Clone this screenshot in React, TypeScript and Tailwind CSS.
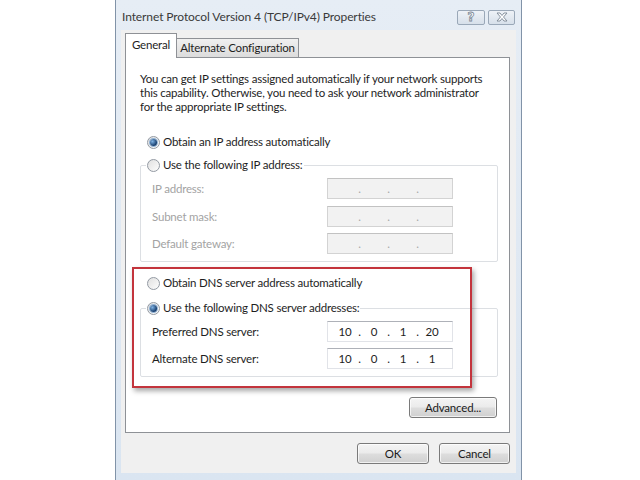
type RadioProps = { checked?: boolean };

function Radio({ checked }: RadioProps) {
  return (
    <span className="w-[13px] h-[13px] shrink-0 rounded-full border border-[#939aa3] bg-[linear-gradient(135deg,#e0e0e0,#fdfdfd)] flex items-center justify-center">
      {checked && (
        <span className="w-[7px] h-[7px] rounded-full bg-[radial-gradient(circle_at_35%_35%,#7fb2e3,#123a6b_70%)] ring-1 ring-[#8fb0d3]" />
      )}
    </span>
  );
}

type IpBoxProps = { parts?: string[]; disabled?: boolean };

function IpBox({ parts, disabled }: IpBoxProps) {
  const p = parts ?? ["", "", "", ""];
  const boxCls = disabled
    ? "w-[126px] h-[21px] flex items-center pl-[5px] bg-[#f2f2f2] border border-[#d3d3d3] border-t-[#c2c2c2] text-[#a8a8a8]"
    : "w-[126px] h-[21px] flex items-center pl-[5px] bg-white border border-[#e1e3e8] border-t-[#aeb1b8] text-[#1e1e1e]";
  return (
    <div className={boxCls}>
      <span className="w-[24px] text-center">{p[0]}</span>
      <span className="w-[5px] text-center">.</span>
      <span className="w-[24px] text-center">{p[1]}</span>
      <span className="w-[5px] text-center">.</span>
      <span className="w-[24px] text-center">{p[2]}</span>
      <span className="w-[5px] text-center">.</span>
      <span className="w-[24px] text-center">{p[3]}</span>
    </div>
  );
}

type BtnProps = { label: string; w: string };

function Btn({ label, w }: BtnProps) {
  return (
    <div
      className={
        w +
        " h-[21px] rounded-[3px] border border-[#7a7a7a] bg-[linear-gradient(180deg,#f4f4f4_0%,#ebebeb_48%,#dddddd_52%,#d0d0d0_100%)] flex items-center justify-center text-[#1a1a1a] shadow-[inset_0_0_0_1px_rgba(255,255,255,0.7)]"
      }
    >
      {label}
    </div>
  );
}

export default function App() {
  return (
    <div className="w-[640px] h-[480px] bg-white flex overflow-hidden font-['Lato',sans-serif] text-[11.5px] leading-[14px] tracking-[-0.2px] text-[#1e1e1e]">
      <div className="ml-[115px] w-[407px] h-[480px] flex flex-col bg-[linear-gradient(180deg,#e6edf5,#dae5f1)] border-x border-[#8193a8]">
        {/* title bar */}
        <div className="h-[30px] flex items-center pl-[6px] pr-[6px] pt-[4px]">
          <span className="text-[12px] tracking-[-0.1px] text-[#3a3a3a] whitespace-nowrap">
            Internet Protocol Version 4 (TCP/IPv4) Properties
          </span>
          <div className="ml-auto flex gap-[3px]">
            <div className="w-[28px] h-[15px] rounded-[2px] border border-[#9aa8b8] bg-[linear-gradient(180deg,#eef2f7,#d7e0ea)] flex items-center justify-center">
              <span className="text-[12px] leading-[12px] font-bold text-white [-webkit-text-stroke:0.8px_#7b8794] font-['DejaVu_Sans',sans-serif]">?</span>
            </div>
            <div className="w-[27px] h-[15px] rounded-[2px] border border-[#9aa8b8] bg-[linear-gradient(180deg,#eef2f7,#d7e0ea)] flex items-center justify-center">
              <svg width="12" height="10" viewBox="0 0 12 10">
                <path
                  d="M1 1 H4 L6 3.5 L8 1 H11 L7.5 5 L11 9 H8 L6 6.5 L4 9 H1 L4.5 5 Z"
                  fill="#ffffff"
                  stroke="#7b8794"
                  strokeWidth="0.9"
                  strokeLinejoin="round"
                />
              </svg>
            </div>
          </div>
        </div>

        {/* client */}
        <div className="mx-[5px] flex-1 bg-[#f0f0f0] flex flex-col pl-[4px] pr-[6px] pt-[3px]">
          {/* tabs */}
          <div className="flex items-end -mb-px relative z-10">
            <div className="w-[52px] h-[25px] bg-white border-t border-l border-r border-[#8e9196] flex items-center justify-center pb-[3px] whitespace-nowrap">
              General
            </div>
            <div className="w-[122px] h-[20px] bg-[linear-gradient(180deg,#f0f0f0,#dcdcdc)] border-t border-r border-b border-[#8e9196] flex items-center justify-center whitespace-nowrap">
              Alternate Configuration
            </div>
          </div>

          {/* panel */}
          <div className="h-[376px] bg-white border border-[#8e9196] relative flex flex-col">
            <p className="pl-[14px] pt-[14px] whitespace-nowrap">
              You can get IP settings assigned automatically if your network supports
              <br />
              this capability. Otherwise, you need to ask your network administrator
              <br />
              for the appropriate IP settings.
            </p>

            <div className="mt-[21px] pl-[21px] flex items-center gap-[3px] h-[14px]">
              <Radio checked />
              <span>Obtain an IP address automatically</span>
            </div>

            <fieldset className="mt-[9px] ml-[14px] w-[358px] border border-[#dcdfe3] rounded-[2px] p-0 pb-[7px]">
              <legend className="ml-[5px] px-[1px] flex items-center gap-[3px] h-[14px]">
                <Radio />
                <span>Use the following IP address:</span>
              </legend>
              <div className="mt-[6px] flex items-center pl-[11px] text-[#a3a3a3]">
                <span className="w-[175px]">IP address:</span>
                <IpBox disabled />
              </div>
              <div className="mt-[7px] flex items-center pl-[11px] text-[#a3a3a3]">
                <span className="w-[175px]">Subnet mask:</span>
                <IpBox disabled />
              </div>
              <div className="mt-[6px] flex items-center pl-[11px] text-[#a3a3a3]">
                <span className="w-[175px]">Default gateway:</span>
                <IpBox disabled />
              </div>
            </fieldset>

            <div className="mt-[14px] pl-[21px] flex items-center gap-[3px] h-[14px]">
              <Radio />
              <span>Obtain DNS server address automatically</span>
            </div>

            <fieldset className="mt-[11px] ml-[14px] w-[358px] border border-[#dcdfe3] rounded-[2px] p-0 pb-[7px]">
              <legend className="ml-[5px] px-[1px] flex items-center gap-[3px] h-[14px]">
                <Radio checked />
                <span>Use the following DNS server addresses:</span>
              </legend>
              <div className="mt-[6px] flex items-center pl-[11px]">
                <span className="w-[175px]">Preferred DNS server:</span>
                <IpBox parts={["10", "0", "1", "20"]} />
              </div>
              <div className="mt-[6px] flex items-center pl-[11px]">
                <span className="w-[175px]">Alternate DNS server:</span>
                <IpBox parts={["10", "0", "1", "1"]} />
              </div>
            </fieldset>

            <div className="mt-[20px] flex justify-end pr-[12px]">
              <Btn label="Advanced..." w="w-[88px]" />
            </div>

            {/* red annotation box */}
            <div className="absolute left-[6px] top-[209px] w-[340px] h-[121px] border-2 border-[#c3343c] shadow-[2px_3px_5px_rgba(0,0,0,0.35)] pointer-events-none" />
          </div>

          {/* dialog buttons */}
          <div className="mt-[10px] flex justify-end gap-[10px]">
            <Btn label="OK" w="w-[72px]" />
            <Btn label="Cancel" w="w-[71px]" />
          </div>
        </div>

        <div className="h-[7px]" />
      </div>
    </div>
  );
}
